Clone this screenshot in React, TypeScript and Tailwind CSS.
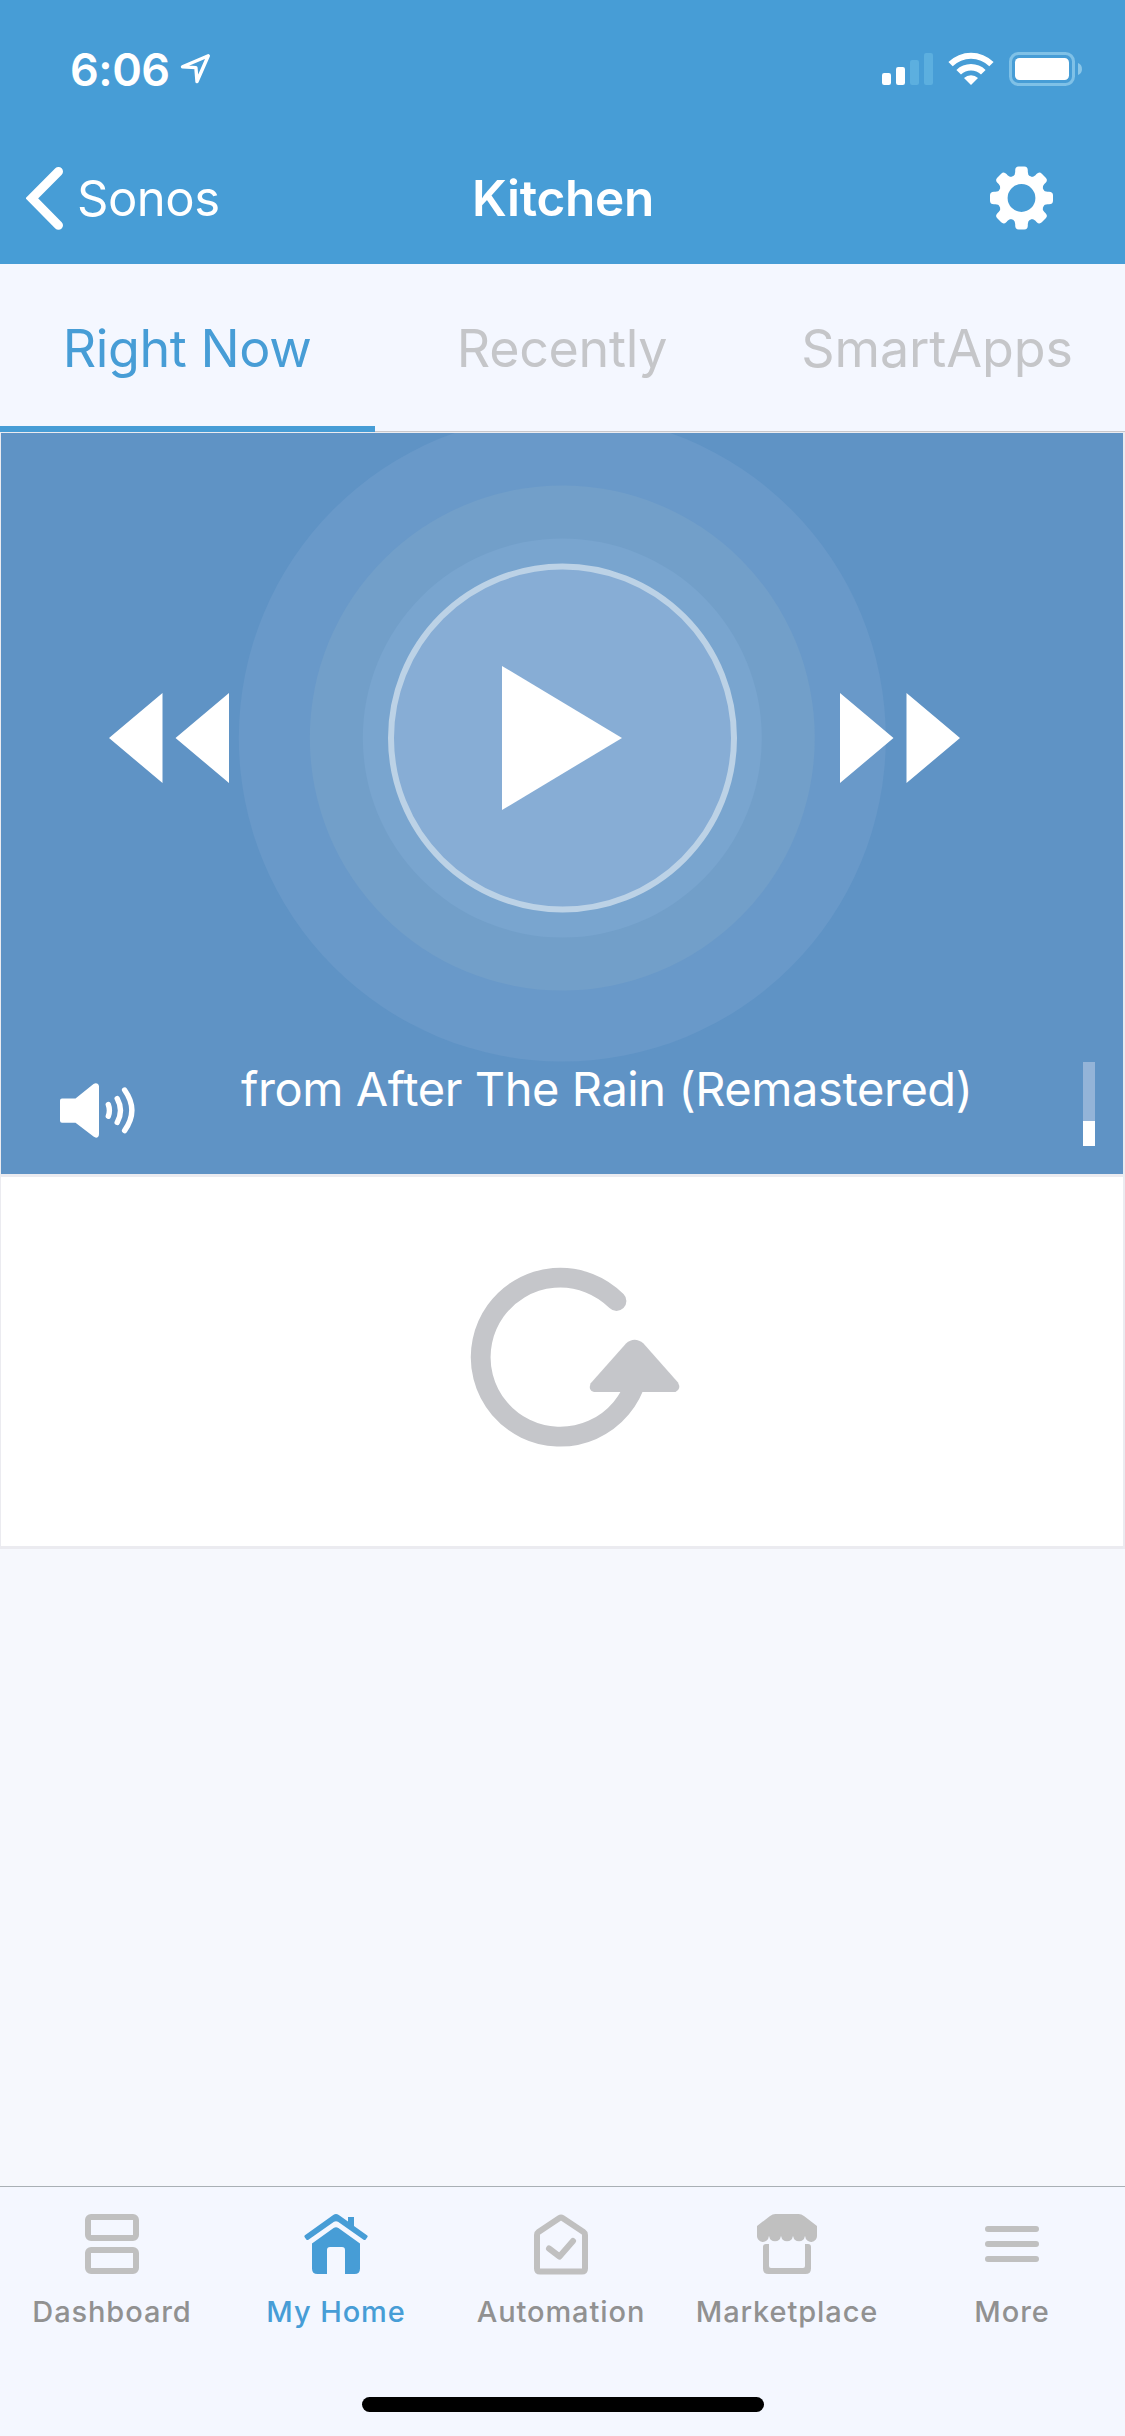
import { useState } from 'react';

const TABS = [
  { name: 'Right Now', text: 'tracking-[-0.4px]' },
  { name: 'Recently', text: 'tracking-[-0.3px]' },
  { name: 'SmartApps', text: 'tracking-[-0.1px]' },
];

/* Status bar */
function StatusBar() {
  return (
    <div className="flex h-[138px] items-center pl-[70px] pr-[42px]">
      <span className="text-[45px] leading-none font-semibold tracking-[-0.5px]">6:06</span>
      <svg className="ml-[8px] h-[36px] w-[36px]" viewBox="178 51 36 36" fill="none">
        <path d="M208.3 55.7 182.5 66.8 195.9 67.6 197 81.5Z" stroke="#fff" strokeWidth="3.4" strokeLinejoin="round" />
      </svg>

      <div className="ml-auto flex items-center">
        <svg className="h-[34px] w-[52px]" viewBox="0 0 52 34">
          <rect x="0" y="21" width="9" height="12" rx="2.2" fill="#fff" />
          <rect x="14" y="15" width="9" height="18" rx="2.2" fill="#fff" />
          <rect x="28" y="8" width="9" height="25" rx="2.2" fill="#5cafdf" />
          <rect x="42" y="1" width="9" height="32" rx="2.2" fill="#5cafdf" />
        </svg>
        <svg className="ml-[14px] h-[34px] w-[46px]" viewBox="948 52 46 34" fill="#fff">
          <path d="M948.4 61.9a32.5 32.5 0 0 1 45.2 0l-4.3 4.3a26 26 0 0 0-36.6 0Z" />
          <path d="M956.4 69.9a21 21 0 0 1 29.2 0l-4.6 4.5a14.6 14.6 0 0 0-20 0Z" />
          <path d="M964 78a10.2 10.2 0 0 1 14 0l-7 7Z" />
        </svg>
        <svg className="ml-[15px] h-[34px] w-[74px]" viewBox="0 0 74 34">
          <rect x="1.5" y="1.5" width="63" height="31" rx="8" fill="none" stroke="#7fc1e7" strokeWidth="3" />
          <rect x="6" y="6" width="54" height="22" rx="4.5" fill="#fff" />
          <path d="M69 11c5.3 1.5 5.3 10.5 0 12Z" fill="#8ac6e8" />
        </svg>
      </div>
    </div>
  );
}

function GearIcon() {
  return (
    <svg className="h-[64px] w-[64px]" viewBox="-31.5 -32 64 64" fill="#fff">
      <circle r="18.7" fill="none" stroke="#fff" strokeWidth="9.6" />
      {[0, 45, 90, 135, 180, 225, 270, 315].map((angle) => (
        <path key={angle} transform={`rotate(${angle})`} d="M-8.5-21.5Q-6.3-23-6.3-26V-27.5Q-6.3-31.5-2.8-31.5H2.8Q6.3-31.5 6.3-27.5V-26Q6.3-23 8.5-21.5Z" />
      ))}
    </svg>
  );
}

function Header() {
  return (
    <header className="h-[264px] bg-[#479dd6] text-white">
      <StatusBar />
      <div className="grid h-[120px] grid-cols-3 items-center">
        <button className="flex items-center pl-[26px]">
          <svg className="h-[64px] w-[40px]" viewBox="26 166 40 64" fill="none">
            <path d="M58.5 171.5 31.9 198.3 58.5 225.3" stroke="#fff" strokeWidth="9" strokeLinecap="round" strokeLinejoin="miter" />
          </svg>
          <span className="ml-[11px] text-[49px] leading-none tracking-[-0.5px]">Sonos</span>
        </button>
        <h1 className="pt-[2px] pl-[1px] text-center text-[49.5px] leading-none font-semibold tracking-[-0.3px]">Kitchen</h1>
        <button className="mr-[71px] ml-auto">
          <GearIcon />
        </button>
      </div>
    </header>
  );
}

/* Player tile */
function Player() {
  return (
    <section className="relative h-[745px] overflow-hidden border-t border-r-2 border-b-[3px] border-l border-[#ebebf0] bg-[#5f93c5] text-white">
      <svg className="absolute top-[-20px] left-[236px] h-[650px] w-[650px]" viewBox="-325.3 -325 650 650">
        <circle r="323.5" fill="#6999c9" />
        <circle r="252.5" fill="#729fc9" />
        <circle r="199.5" fill="#79a5cf" />
      </svg>

      <div className="relative flex h-[610px] items-center pl-[108px]">
        <button>
          <svg className="h-[90px] w-[120px]" viewBox="0 0 120 90" fill="#fff">
            <path d="M53.5 0v90L0 45ZM120 0v90L66.5 45Z" />
          </svg>
        </button>
        <button className="ml-[158px]">
          <svg className="h-[350px] w-[350px]" viewBox="-175.5 -175 350 350">
            <circle r="171.5" fill="#87add5" stroke="#bcd2e6" strokeWidth="6" />
            <path d="M-60.5-72 59.5 0-60.5 72Z" fill="#fff" />
          </svg>
        </button>
        <button className="ml-[103px]">
          <svg className="h-[90px] w-[120px]" viewBox="0 0 120 90" fill="#fff">
            <path d="M0 0v90L53.5 45ZM66.5 0v90L120 45Z" />
          </svg>
        </button>
      </div>

      <div className="relative flex items-start pl-[57px]">
        <svg className="mt-[37px] h-[60px] w-[80px]" viewBox="58 1080 80 60" fill="none">
          <path d="M60 1100.5Q60 1098.5 62 1098.5H75.5L93.5 1084Q96 1082.5 98 1084Q99 1085 99 1086.5V1134Q99 1136 98 1137Q96 1138.5 93.5 1136.5L75.5 1122.7H62Q60 1122.7 60 1120.7Z" fill="#fff" />
          <path d="M108.3 1104.5q2.2 5.9 0 11.8M117.2 1098.5q6.6 12 0 24M124.6 1090q14.5 20.4 0 40.6" stroke="#fff" strokeWidth="5.4" strokeLinecap="round" />
        </svg>
        <p className="mt-[18px] ml-[103px] w-[736px] text-[47px] leading-[56px] tracking-[-0.42px] whitespace-nowrap">from After The Rain (Remastered)</p>
        <div className="mt-[19px] ml-[106px] flex h-[84px] w-[12px] flex-col justify-end bg-[#94b4d8]">
          <div className="h-[25px] bg-white" />
        </div>
      </div>
    </section>
  );
}

function RefreshTile() {
  return (
    <section className="flex h-[372px] justify-center border-r-2 border-b-[3px] border-l border-[#ebebf0] bg-white pt-[85px]">
      <svg className="ml-[28px] h-[190px] w-[220px]" viewBox="466 1262 220 190">
        <path d="M616.5 1301.1A79.5 79.5 0 1 0 636.5 1379.5" fill="none" stroke="#c5c6ca" strokeWidth="19.8" strokeLinecap="round" />
        <path d="M626 1343.5Q634.5 1336 643.5 1343.5L678 1382.5Q681.5 1389 675.5 1392H594Q588 1391 590.5 1383.5Z" fill="#c5c6ca" />
      </svg>
    </section>
  );
}

/* Bottom navigation icons */
const NAV = [
  {
    name: 'Dashboard',
    icon: (
      <g fill="none" stroke="currentColor" strokeWidth="6">
        <rect x="8" y="3" width="48" height="21" rx="3" />
        <rect x="8" y="36" width="48" height="21" rx="3" />
      </g>
    ),
  },
  {
    name: 'My Home',
    icon: (
      <g fill="currentColor">
        <path d="M.9 21.2 29.2.9Q32 -.8 34.8.9L44 7.6V3h6v9l13.3 9.4q.8.9 0 1.9l-1.8 2.4q-.9.7-1.9.1L34 7.8Q32 6.5 30 7.8L4.4 25.8q-1 .6-1.9-.1L.7 23.2q-.7-1 .2-2Z" />
        <path d="M8 29.5 29.6 14Q32 12.3 34.4 14L56 29.5V54.5q0 5.5-5.5 5.5H41V36q0-3-3-3H26q-3 0-3 3v24h-9.5Q8 60 8 54.5Z" />
      </g>
    ),
  },
  {
    name: 'Automation',
    icon: (
      <g fill="none" stroke="currentColor" strokeWidth="6" strokeLinejoin="round">
        <path d="M8 21q0-2 1.5-3L30.5 4Q32 3 33.5 4L54.5 18Q56 19 56 21V54.5q0 3-3 3H11q-3 0-3-3Z" />
        <path d="m20 34.5 10.5 8L44 27" strokeLinecap="round" />
      </g>
    ),
  },
  {
    name: 'Marketplace',
    icon: (
      <g fill="currentColor">
        <path d="M2 12 15 2Q17.5 0 20.5 0H43.5Q46.5 0 49 2L62 12V21.5A5.9 5.9 0 0 1 50.2 22.5Q50 21.5 49.8 22.5A5.9 5.9 0 0 1 38.2 22.5Q38 21.5 37.8 22.5A5.9 5.9 0 0 1 26.2 22.5Q26 21.5 25.8 22.5A5.9 5.9 0 0 1 14.2 22.5Q14 21.5 13.8 22.5A5.9 5.9 0 0 1 2 21.5Z" />
        <path d="M8 33q0-3 3-3h3V52q0 2 2 2H48q2 0 2-2V30h3q3 0 3 3V54.5q0 5.5-5.5 5.5H13.5Q8 60 8 54.5Z" />
      </g>
    ),
  },
  {
    name: 'More',
    icon: <path d="M8 15H56M8 30H56M8 45H56" stroke="currentColor" strokeWidth="6" strokeLinecap="round" />,
  },
];

function BottomNav() {
  return (
    <nav className="h-[250px] border-t border-[#a9b0b5] bg-[#f4f7ff]">
      <div className="grid grid-cols-[224px_224px_226px_226px_224px] pt-[27px]">
        {NAV.map((item) => {
          const active = item.name === 'My Home';
          return (
            <button key={item.name} className="flex flex-col items-center">
              <svg className={`h-[62px] w-[64px] ${active ? 'text-[#479dd6]' : 'text-[#c0c0c0]'}`} viewBox="0 0 64 62">
                {item.icon}
              </svg>
              <span className={`mt-[18px] text-[29px] leading-[36px] font-[450] tracking-[0.9px] ${active ? 'text-[#479dd6]' : 'text-[#919191]'}`}>
                {item.name}
              </span>
            </button>
          );
        })}
      </div>
      <div className="mx-auto mt-[67px] h-[15px] w-[402px] rounded-full bg-black" />
    </nav>
  );
}

export default function App() {
  const [tab, setTab] = useState('Right Now');

  return (
    <div className="flex h-[2436px] w-[1125px] flex-col overflow-hidden bg-[#f6f8fd] font-['Inter',sans-serif]">
      <Header />

      <div className="grid h-[168px] shrink-0 grid-cols-3 bg-[#f4f7ff] text-[52px]">
        {TABS.map((t) => (
          <button
            key={t.name}
            onClick={() => setTab(t.name)}
            className={`relative flex items-center justify-center pt-[2px] pr-[1px] ${t.text} ${tab === t.name ? 'text-[#479dd6]' : 'text-[#c5c6c9]'}`}
          >
            {t.name}
            <span className={`absolute inset-x-0 bottom-0 ${tab === t.name ? 'h-[6px] bg-[#479dd6]' : 'h-px bg-[#c8c8cc]'}`} />
          </button>
        ))}
      </div>

      <Player />
      <RefreshTile />

      <div className="flex-1" />
      <BottomNav />
    </div>
  );
}
